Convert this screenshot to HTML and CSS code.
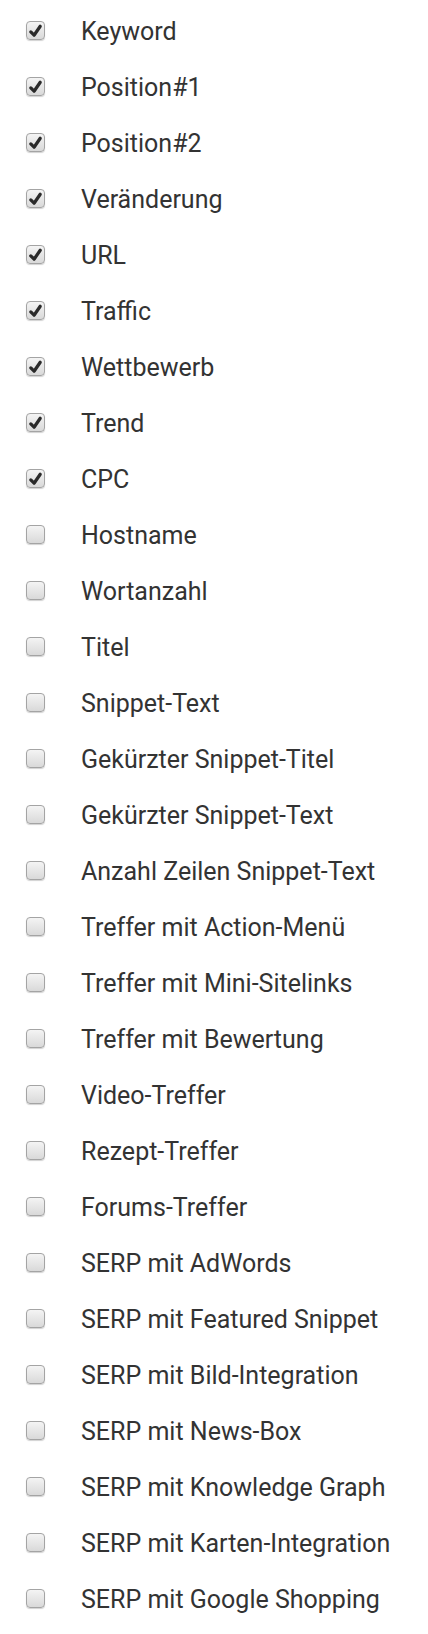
FILE: index.html
```html
<!DOCTYPE html>
<html lang="de">
<head>
    <meta charset="UTF-8">
    <meta name="viewport" content="width=device-width, initial-scale=1.0">
    <title>Spalten</title>
    <link rel="stylesheet" href="styles.css">
</head>
<body>
    <ul class="columns">
        <li><span class="box on"><svg viewBox="0 0 18 18"><path d="M4 10.5 L7.5 14 L14 4.5"/></svg></span><span class="label">Keyword</span></li>
        <li><span class="box on"><svg viewBox="0 0 18 18"><path d="M4 10.5 L7.5 14 L14 4.5"/></svg></span><span class="label">Position#1</span></li>
        <li><span class="box on"><svg viewBox="0 0 18 18"><path d="M4 10.5 L7.5 14 L14 4.5"/></svg></span><span class="label">Position#2</span></li>
        <li><span class="box on"><svg viewBox="0 0 18 18"><path d="M4 10.5 L7.5 14 L14 4.5"/></svg></span><span class="label">Veränderung</span></li>
        <li><span class="box on"><svg viewBox="0 0 18 18"><path d="M4 10.5 L7.5 14 L14 4.5"/></svg></span><span class="label">URL</span></li>
        <li><span class="box on"><svg viewBox="0 0 18 18"><path d="M4 10.5 L7.5 14 L14 4.5"/></svg></span><span class="label">Traffic</span></li>
        <li><span class="box on"><svg viewBox="0 0 18 18"><path d="M4 10.5 L7.5 14 L14 4.5"/></svg></span><span class="label">Wettbewerb</span></li>
        <li><span class="box on"><svg viewBox="0 0 18 18"><path d="M4 10.5 L7.5 14 L14 4.5"/></svg></span><span class="label">Trend</span></li>
        <li><span class="box on"><svg viewBox="0 0 18 18"><path d="M4 10.5 L7.5 14 L14 4.5"/></svg></span><span class="label">CPC</span></li>
        <li><span class="box"></span><span class="label">Hostname</span></li>
        <li><span class="box"></span><span class="label">Wortanzahl</span></li>
        <li><span class="box"></span><span class="label">Titel</span></li>
        <li><span class="box"></span><span class="label">Snippet-Text</span></li>
        <li><span class="box"></span><span class="label">Gekürzter Snippet-Titel</span></li>
        <li><span class="box"></span><span class="label">Gekürzter Snippet-Text</span></li>
        <li><span class="box"></span><span class="label">Anzahl Zeilen Snippet-Text</span></li>
        <li><span class="box"></span><span class="label">Treffer mit Action-Menü</span></li>
        <li><span class="box"></span><span class="label">Treffer mit Mini-Sitelinks</span></li>
        <li><span class="box"></span><span class="label">Treffer mit Bewertung</span></li>
        <li><span class="box"></span><span class="label">Video-Treffer</span></li>
        <li><span class="box"></span><span class="label">Rezept-Treffer</span></li>
        <li><span class="box"></span><span class="label">Forums-Treffer</span></li>
        <li><span class="box"></span><span class="label">SERP mit AdWords</span></li>
        <li><span class="box"></span><span class="label">SERP mit Featured Snippet</span></li>
        <li><span class="box"></span><span class="label">SERP mit Bild-Integration</span></li>
        <li><span class="box"></span><span class="label">SERP mit News-Box</span></li>
        <li><span class="box"></span><span class="label">SERP mit Knowledge Graph</span></li>
        <li><span class="box"></span><span class="label">SERP mit Karten-Integration</span></li>
        <li><span class="box"></span><span class="label">SERP mit Google Shopping</span></li>
    </ul>
</body>
</html>
```

FILE: styles.css
```css
* {
    margin: 0;
    padding: 0;
    box-sizing: border-box;
}

body {
    background: white;
    color: #333;
    font-family: Roboto, 'Liberation Sans', sans-serif;
}

.columns {
    list-style: none;
    padding: 2px 0 0 26px;
}

.columns li {
    display: flex;
    align-items: center;
    height: 56px;
}

.box {
    display: flex;
    align-items: center;
    justify-content: center;
    width: 19px;
    height: 19px;
    border: 1px solid #a4a4a4;
    border-radius: 4px;
    background: linear-gradient(#f4f4f4, #d9d9d9);
    box-shadow: 0 1px 1px rgba(0, 0, 0, 0.18);
    margin-right: 36px;
}

.box svg {
    width: 17px;
    height: 17px;
}

.box path {
    fill: none;
    stroke: #2a2a2a;
    stroke-width: 3.4;
    stroke-linecap: round;
    stroke-linejoin: round;
}

.label {
    font-size: 25px;
    line-height: 1;
    padding-top: 2px;
}
```
